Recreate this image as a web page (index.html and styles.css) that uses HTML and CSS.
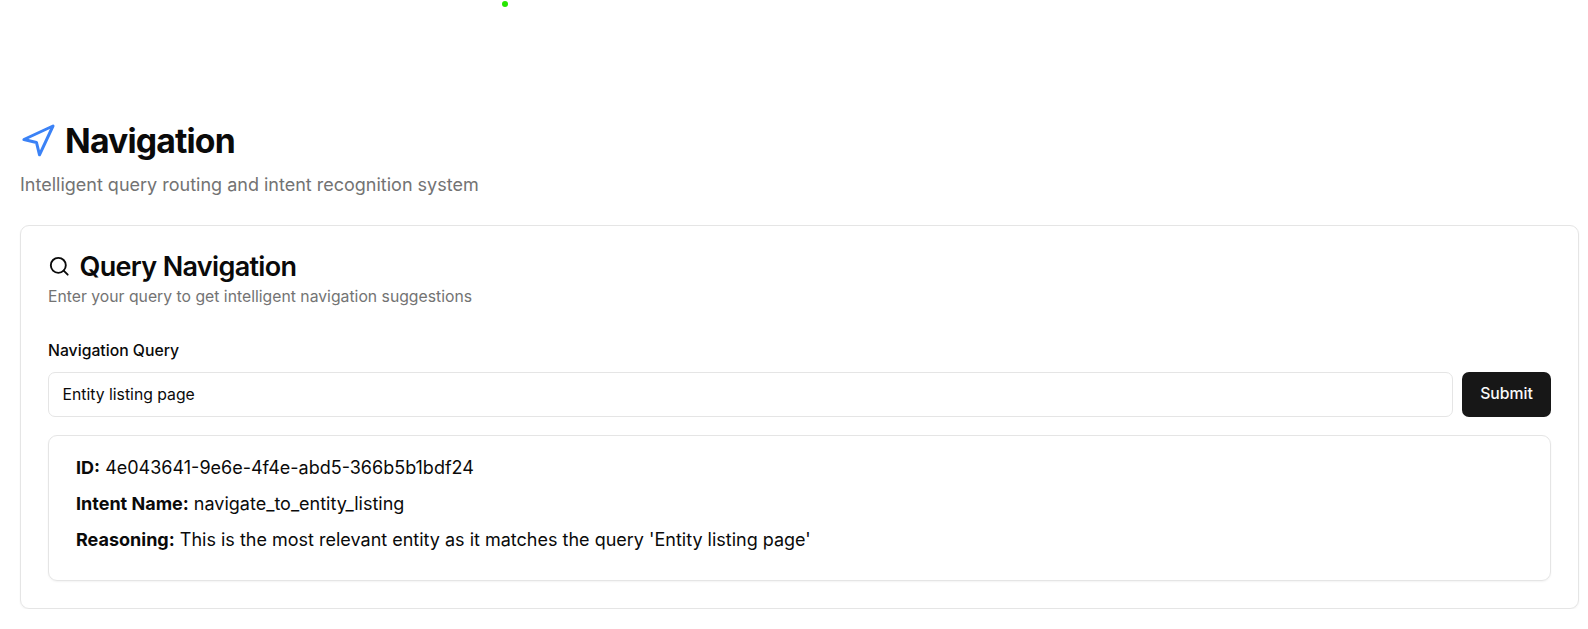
FILE: index.html
```html
<!DOCTYPE html>
<html lang="en">
<head>
<meta charset="utf-8">
<title>Navigation</title>
<link rel="stylesheet" href="styles.css">
</head>
<body>
<span class="status-dot"></span>
<main class="page">
  <header class="page-header">
    <h1 class="page-title">
      <svg class="nav-icon" viewBox="0 0 24 24"><polygon points="2.6 11 22 2 13 21.2 11 13 2.6 11"/></svg>
      <span class="page-name">Navigation</span>
    </h1>
    <p class="page-subtitle">Intelligent query routing and intent recognition system</p>
  </header>
  <section class="card">
    <h2 class="card-title">
      <svg class="search-icon" viewBox="0 0 24 24"><circle cx="11" cy="11" r="8"/><path d="m21 21-4.3-4.3"/></svg>
      <span class="card-name">Query Navigation</span>
    </h2>
    <p class="card-description">Enter your query to get intelligent navigation suggestions</p>
    <form class="query-form">
      <label class="query-label" for="query">Navigation Query</label>
      <div class="query-row">
        <input class="query-input" id="query" type="text" value="Entity listing page">
        <button class="submit" type="button">Submit</button>
      </div>
    </form>
    <div class="result">
      <p class="result-row"><strong class="result-key">ID:</strong> 4e043641-9e6e-4f4e-abd5-366b5b1bdf24</p>
      <p class="result-row"><strong class="result-key">Intent Name:</strong> navigate_to_entity_listing</p>
      <p class="result-row"><strong class="result-key">Reasoning:</strong> This is the most relevant entity as it matches the query 'Entity listing page'</p>
    </div>
  </section>
</main>
</body>
</html>
```
FILE: styles.css
```css
* {
  box-sizing: border-box;
  margin: 0;
}

body {
  background: #fff;
  color: #0a0a0a;
  font-family: Inter, "Liberation Sans", sans-serif;
  font-size: 18px;
  line-height: 27px;
}

.status-dot {
  position: absolute;
  top: 1px;
  left: 502px;
  width: 6px;
  height: 6px;
  border-radius: 50%;
  background: #26e600;
}

.page {
  padding: 120.5px 9px 0 20px;
}

.page-header {
  margin-bottom: 27px;
}

.page-title {
  display: flex;
  align-items: center;
  gap: 9px;
  height: 40.5px;
  margin-bottom: 10px;
  font-size: 33.75px;
  font-weight: 700;
  line-height: 40.5px;
  letter-spacing: -0.025em;
}

.nav-icon,
.search-icon {
  flex: none;
  fill: none;
  stroke: currentColor;
  stroke-width: 2;
  stroke-linecap: round;
  stroke-linejoin: round;
}

.nav-icon {
  width: 36px;
  height: 36px;
  color: #3b82f6;
}

.page-subtitle {
  color: #737373;
}

.card {
  padding: 27px;
  border: 1px solid #e5e5e5;
  border-radius: 9px;
  box-shadow: 0 1px 2px rgba(0, 0, 0, 0.05);
}

.card-title {
  display: flex;
  align-items: center;
  gap: 9px;
  font-size: 27px;
  font-weight: 600;
  line-height: 27px;
  letter-spacing: -0.025em;
}

.search-icon {
  width: 22.5px;
  height: 22.5px;
}

.card-description {
  margin-top: 6px;
  color: #737373;
  font-size: 15.75px;
  line-height: 22.5px;
}

.query-form {
  display: flex;
  flex-direction: column;
  gap: 10px;
  margin-top: 30px;
}

.query-label {
  font-size: 15.75px;
  font-weight: 500;
  line-height: 23px;
}

.query-row {
  display: flex;
  gap: 9px;
}

.query-input {
  flex: 1;
  height: 45px;
  padding: 0 13.5px;
  border: 1px solid #e5e5e5;
  border-radius: 7px;
  background: #fff;
  color: inherit;
  font: inherit;
  font-size: 15.75px;
}

.submit {
  width: 89px;
  height: 45px;
  padding: 0 0 2px;
  border: 0;
  border-radius: 7px;
  background: #171717;
  color: #fafafa;
  font: inherit;
  font-size: 15.75px;
  font-weight: 500;
}

.result {
  display: flex;
  flex-direction: column;
  gap: 9px;
  margin-top: 18px;
  padding: 18px 27px 27px;
  border: 1px solid #e5e5e5;
  border-radius: 9px;
  box-shadow: 0 1px 2px rgba(0, 0, 0, 0.05);
}

.result-key {
  font-weight: 700;
}
```
